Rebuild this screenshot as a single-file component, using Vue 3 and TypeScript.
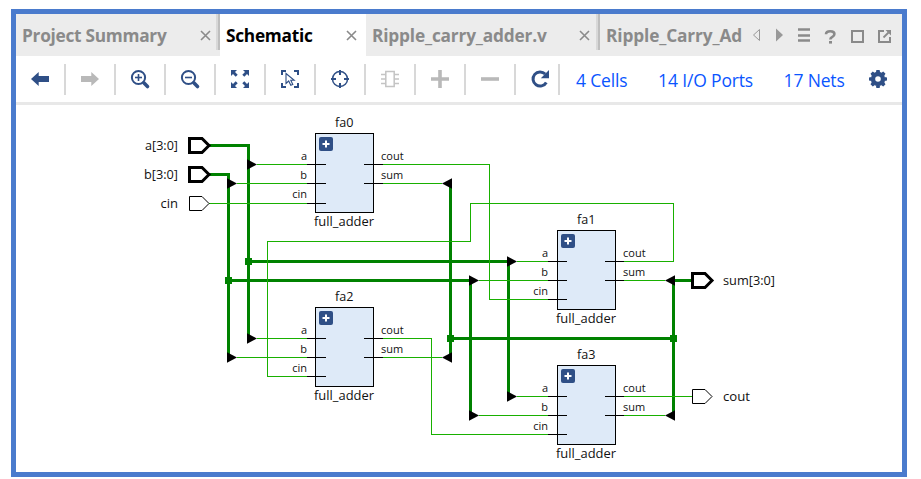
<script setup lang="ts">
interface Tab { title: string; cls: string; active?: boolean }
interface Cell { name: string; x: number; y: number; dx: number; cin: number }
interface Port { name: string; x: number; y: number; bus: boolean; out: boolean; len: number }

const tabs: Tab[] = [
  { title: 'Project Summary', cls: 'summary' },
  { title: 'Schematic', cls: 'schematic', active: true },
  { title: 'Ripple_carry_adder.v', cls: 'source' },
]

const tools = ['back', 'forward', 'zoomin', 'zoomout', 'fit', 'select', 'target', 'chip', 'plus', 'minus', 'reload']

const cells: Cell[] = [
  { name: 'fa0', x: 315, y: 133, dx: 0, cin: 70 },
  { name: 'fa1', x: 557, y: 230, dx: -1, cin: 69 },
  { name: 'fa2', x: 315, y: 307, dx: 0, cin: 69 },
  { name: 'fa3', x: 557, y: 365, dx: -1, cin: 69 },
]

const inputs = (c: Cell) => [
  { label: 'a', y: 31, ty: 27 },
  { label: 'b', y: 50, ty: 46 },
  { label: 'cin', y: c.cin, ty: 65 },
]
const outputs = [
  { label: 'cout', y: 31, ty: 27 },
  { label: 'sum', y: 50, ty: 46 },
]

const ports: Port[] = [
  { name: 'a[3:0]', x: 189, y: 145, bus: true, out: false, len: 33 },
  { name: 'b[3:0]', x: 189, y: 174, bus: true, out: false, len: 34 },
  { name: 'cin', x: 189, y: 203, bus: false, out: false, len: 17.5 },
  { name: 'sum[3:0]', x: 692, y: 280, bus: true, out: true, len: 52 },
  { name: 'cout', x: 692, y: 396, bus: false, out: true, len: 27 },
]

const buses = [
  'M209 145.5H248.5V338', 'M209 174.5H228.5V357', 'M248.5 261.5H508.5V396',
  'M228.5 280.5H470.5V415', 'M450.5 183V357', 'M450.5 338.5H673.5', 'M673.5 415V280.5H692',
]
const nets = [
  'M209 203.5H307', 'M257 164.5H307', 'M237 183.5H307',
  'M383 164.5H489.5V299.5H548', 'M383 183.5H442', 'M517 261.5H548', 'M479 280.5H548',
  'M624 261.5H673.5V203.5H470.5V241.5H267.5V376.5H307', 'M624 280.5H665',
  'M257 338.5H307', 'M237 357.5H307', 'M383 338.5H431.5V434.5H548', 'M383 357.5H442',
  'M517 396.5H548', 'M479 415.5H548', 'M624 396.5H692', 'M624 415.5H665',
]
const joints = [[248, 261], [228, 280], [450, 338], [673, 338]]
const rightTaps = [[247, 164], [227, 183], [507, 261], [469, 280], [247, 338], [227, 357], [507, 396], [469, 415]]
const leftTaps = [[452, 183], [675, 280], [452, 357], [675, 415]]
</script>

<template>
  <div class="window">
    <header class="tabs">
      <div v-for="t in tabs" :key="t.title" class="tab" :class="[t.cls, { active: t.active }]">
        <span class="title">{{ t.title }}</span>
        <svg class="close" width="11" height="11" viewBox="0 0 11 11"><path d="M1 1l9 9M10 1l-9 9" /></svg>
      </div>
      <div class="tab last"><span class="title">Ripple_Carry_Ad</span></div>
      <svg class="controls" width="150" height="42" viewBox="752 14 150 42">
        <path d="M759.5 29.5v11l-6-5.5z" fill="none" stroke="#999" />
        <path d="M776 28.5v13l7-6.5z" fill="#999" />
        <path d="M798 29.5h12M798 35.5h12M798 40.5h12" fill="none" stroke="#8a8a8a" stroke-width="2.4" />
        <path d="M826 34.2q0-3 4.2-3t4.2 2.9q0 1.8-2 2.8t-2.1 2.6" fill="none" stroke="#8a8a8a" stroke-width="2.6" />
        <path d="M829 41h3v2.6h-3z" fill="#8a8a8a" />
        <path d="M852 31h11v11h-11z" fill="none" stroke="#8a8a8a" stroke-width="2" />
        <path d="M884 31h-5v11h11v-5" fill="none" stroke="#8a8a8a" stroke-width="2" />
        <path d="M883.5 37.5l5-5" fill="none" stroke="#8a8a8a" stroke-width="1.8" />
        <path d="M885.5 30h5.5v5.5z" fill="#8a8a8a" />
      </svg>
    </header>

    <nav class="toolbar">
      <div v-for="k in tools" :key="k" class="tool" :class="k">
        <svg width="24" height="24" viewBox="-12 -12 24 24">
          <path v-if="k === 'back'" class="solid" d="M-9 0L-1.3-7V-3H9V3H-1.3V7Z" />
          <path v-else-if="k === 'forward'" class="muted" d="M9 0L1.3-7V-3H-9V3H1.3V7Z" />
          <g v-else-if="k === 'zoomin' || k === 'zoomout'" class="line">
            <circle cx="-1.5" cy="-1.5" r="6.6" stroke-width="2" />
            <path d="M3.8 3.8L7.5 7.5" stroke-width="3.6" stroke-linecap="round" />
            <path d="M-5-1.5H2" stroke-width="1.6" />
            <path v-if="k === 'zoomin'" d="M-1.5-5V2" stroke-width="1.6" />
          </g>
          <g v-else-if="k === 'fit'">
            <g v-for="r in [0, 90, 180, 270]" :key="r" :transform="`rotate(${r})`">
              <path class="solid" d="M-9-9h6l-2 2L-2.3-4.3-4.3-2.3-7-5l-2 2z" />
            </g>
          </g>
          <g v-else-if="k === 'select'" class="line">
            <path d="M-8-4V-8H-4M4-8H8V-4M8 4V8H4M-4 8H-8V4" stroke-width="2" />
            <path d="M-4-5.5V4.5L-1.3 2 .8 6.3 2.8 5.4.8 1.3H4.2Z" stroke-width="1.1" />
          </g>
          <g v-else-if="k === 'target'" class="line">
            <circle r="7.5" stroke-width="1.5" />
            <path d="M-9 0H-4M4 0H9M0-9V-4M0 4V9" stroke-width="2" />
          </g>
          <g v-else-if="k === 'chip'" class="chipline">
            <path d="M-4.2-7.5H4.2V7.5H-4.2Z" />
            <path d="M-9-4.5h5M-9 0h5M-9 4.5h5M4-4.5h5M4 0h5M4 4.5h5" />
          </g>
          <path v-else-if="k === 'plus'" class="muted" d="M-9-1.8H-1.8V-9H1.8V-1.8H9V1.8H1.8V9H-1.8V1.8H-9Z" />
          <path v-else-if="k === 'minus'" class="muted" d="M-9-1.8H9V1.8H-9Z" />
          <g v-else>
            <path class="line" d="M5.2-5A7.1 7.1 0 1 0 6.3 3.5" stroke-width="3" />
            <path class="solid" d="M9-9v8.2H.8z" />
          </g>
        </svg>
      </div>
      <div class="stats">
        <a>4 Cells</a>
        <a>14 I/O Ports</a>
        <a>17 Nets</a>
      </div>
      <svg class="gear" width="20" height="20" viewBox="-10 -10 20 20">
        <circle r="5" fill="none" stroke="#2f4f86" stroke-width="4.4" />
        <path v-for="r in [0, 45, 90, 135, 180, 225, 270, 315]" :key="r" class="solid" d="M-2.1-6.5L-1.6-9H1.6L2.1-6.5Z" :transform="`rotate(${r})`" />
      </svg>
    </nav>

    <svg class="canvas" width="886" height="367" viewBox="16 105 886 367">
      <path v-for="d in buses" :key="d" class="bus" :d="d" />
      <path v-for="d in nets" :key="d" class="net" :d="d" />
      <rect v-for="j in joints" :key="j.join()" class="joint" :x="j[0] - 3" :y="j[1] - 3" width="7" height="7" />
      <path v-for="t in rightTaps" :key="t.join()" :d="`M${t[0]} ${t[1] - 4.8}l10 5.3l-10 5.3z`" />
      <path v-for="t in leftTaps" :key="t.join()" :d="`M${t[0]} ${t[1] - 4.8}l-10 5.3l10 5.3z`" />

      <g v-for="p in ports" :key="p.name" :transform="`translate(${p.x} ${p.y})`">
        <path class="port" :class="{ wide: p.bus }" d="M.5-6.5H13L20 .5L13 7.5H.5Z" />
        <text class="name" :x="p.out ? 31 : -11 - p.len" y="5" :textLength="p.len" lengthAdjust="spacingAndGlyphs">{{ p.name }}</text>
      </g>

      <g v-for="c in cells" :key="c.name" :transform="`translate(${c.x} ${c.y})`">
        <rect class="body" x=".5" y=".5" width="58" height="79" />
        <g v-for="i in inputs(c)" :key="i.label">
          <path class="pin" :d="`M${c.dx - 8} ${i.y + 0.5}h19`" />
          <text class="pinname" :x="c.dx - 8" :y="i.ty" text-anchor="end">{{ i.label }}</text>
        </g>
        <g v-for="o in outputs" :key="o.label">
          <path class="pin" :d="`M${c.dx + 49} ${o.y + 0.5}h19`" />
          <text class="pinname" x="66" :y="o.ty">{{ o.label }}</text>
        </g>
        <rect class="badge" x="4" y="4" width="14" height="14" rx="2" />
        <path class="cross" d="M7.5 11h7M11 7.5v7" />
        <text class="name" x="20" y="-6" textLength="18.5" lengthAdjust="spacingAndGlyphs">{{ c.name }}</text>
        <text class="name" x="-1" y="93" textLength="60" lengthAdjust="spacingAndGlyphs">full_adder</text>
      </g>
    </svg>
  </div>
</template>

<style>
body { background: #fff; }
</style>

<style scoped>
.window {
  box-sizing: border-box;
  display: flow-root;
  width: 896px;
  height: 468px;
  margin: 9px 0 0 11px;
  border: 5px solid #4a7bcd;
  background: #fff;
  font-family: "Open Sans", "Noto Sans", sans-serif;
  overflow: hidden;
}
.tabs, .toolbar { display: flex; }
.tabs { height: 42px; background: #ececec; }
.tab {
  box-sizing: border-box;
  flex: none;
  display: flex;
  align-items: center;
  justify-content: space-between;
  padding: 0 9px 0 6px;
  color: #8a8a8a;
  font-weight: 700;
  font-size: 17.3px;
  letter-spacing: -0.28px;
  white-space: nowrap;
}
.title { line-height: 40px; padding-top: 2px; }
.summary { width: 204px; }
.schematic { width: 146px; }
.source { width: 234px; padding-right: 10px; letter-spacing: -0.18px; }
.last { width: 152px; padding-right: 0; letter-spacing: -0.14px; }
.summary, .source {
  background: linear-gradient(90deg, #d8d8d8 50%, #bebebe 50%) right top / 4px 36px no-repeat;
}
.active { background: #fff; color: #000; }
.close { flex: none; }
.close path { fill: none; stroke: #8a8a8a; stroke-width: 1.6; }
.controls { flex: none; }
.toolbar {
  box-sizing: border-box;
  height: 49px;
  border-bottom: 3px solid #e8e8e8;
  align-items: center;
}
.tool {
  box-sizing: border-box;
  flex: none;
  width: 50px;
  height: 31px;
  display: flex;
  align-items: center;
  justify-content: center;
  border-right: 2px solid #d8d8d8;
}
.reload { width: 44px; padding-left: 5px; }
.solid { fill: #2f4f86; }
.muted { fill: #b9b9b9; }
.line { fill: none; stroke: #2f4f86; }
.chipline { fill: none; stroke: #c4c4c4; stroke-width: 1.5; }
.stats {
  display: flex;
  flex: none;
  gap: 30.5px;
  width: 308px;
  padding-left: 16px;
  box-sizing: border-box;
  color: #0a55ff;
  font-size: 17.5px;
  letter-spacing: -0.15px;
  line-height: 24px;
  padding-top: 2px;
  white-space: nowrap;
}
.gear { flex: none; }
.canvas { display: block; }
.bus { fill: none; stroke: #008200; stroke-width: 3; shape-rendering: crispEdges; }
.net { fill: none; stroke: #18b000; shape-rendering: crispEdges; }
.joint { fill: #008200; }
.port { fill: #fff; stroke: #000; }
.wide { stroke-width: 3; }
.body { fill: #deeaf8; stroke: #000; }
.pin { stroke: #000; }
.badge { fill: #2f4f86; }
.cross { stroke: #fff; stroke-width: 2; }
.name { font-size: 13.4px; fill: #111; }
.pinname { font-size: 11px; fill: #111; }
</style>
